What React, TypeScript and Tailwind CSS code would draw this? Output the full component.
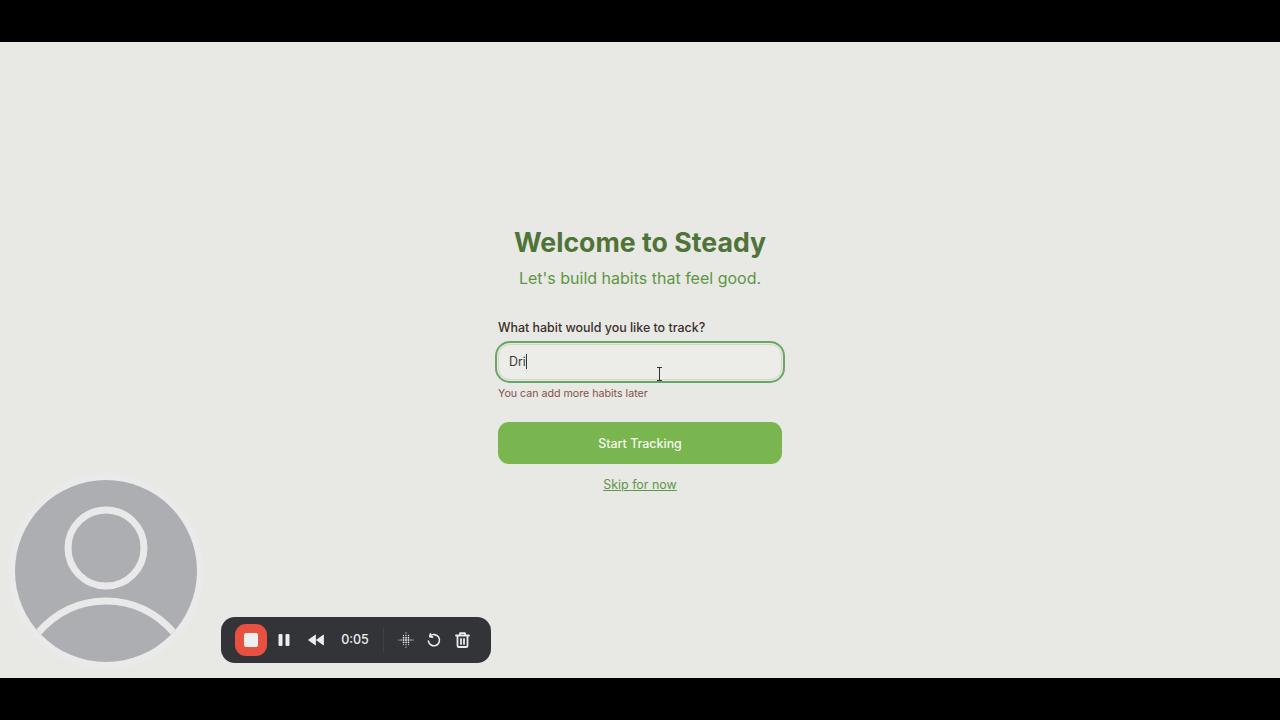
import React from "react";

function Dots() {
  const dots: [number, number, number][] = [
    [8, 0.9, 0.6], [8, 3.4, 0.7], [8, 5.7, 0.9], [8, 8, 1], [8, 10.3, 0.9], [8, 12.6, 0.7], [8, 15.1, 0.6],
    [5.5, 3.4, 0.55], [5.5, 5.7, 0.85], [5.5, 8, 0.9], [5.5, 10.3, 0.85], [5.5, 12.6, 0.55],
    [10.5, 3.4, 0.55], [10.5, 5.7, 0.85], [10.5, 8, 0.9], [10.5, 10.3, 0.85], [10.5, 12.6, 0.55],
    [3, 8, 0.7], [13, 8, 0.7],
    [0.9, 8, 0.6], [15.1, 8, 0.6],
  ];
  return (
    <svg width="16" height="16" viewBox="0 0 16 16" fill="#e8e8e8">
      {dots.map(([x, y, r], i) => (
        <circle key={i} cx={x} cy={y} r={r} />
      ))}
    </svg>
  );
}

export default function App() {
  return (
    <div className="relative flex h-[720px] w-[1280px] flex-col overflow-hidden bg-black font-['Inter',sans-serif]">
      <div className="mt-[42px] flex h-[636px] items-center justify-center bg-[#e8e9e4]">
        <div className="flex w-[284px] flex-col">
          <h1 className="whitespace-nowrap text-center text-[26.7px] leading-[34px] font-bold text-[#50733a]">
            Welcome to Steady
          </h1>
          <p className="mt-[7px] whitespace-nowrap text-center text-base leading-6 text-[#5e9645]">
            Let's build habits that feel good.
          </p>
          <label className="mt-[28px] text-[12.45px] leading-5 font-medium text-[#3a2f2c]">
            What habit would you like to track?
          </label>
          <div className="mt-[6px] flex h-[36px] items-center rounded-[12px] border border-[#dcd3c5] bg-[#ecece9] px-[10px] shadow-[0_0_0_1px_#e8e9e4,0_0_0_3px_#66a863]">
            <span className="text-[12.45px] leading-5 text-[#3f3a38]">Dri</span>
            <span className="h-[15px] w-px bg-[#333333]" />
          </div>
          <p className="mt-[6px] text-[10.65px] leading-4 text-[#85504a]">You can add more habits later</p>
          <button className="mt-[20px] h-[42px] rounded-[11px] bg-[#7ab650] pt-[3px] text-[12.45px] leading-5 font-medium text-[#f4f7ee]">
            Start Tracking
          </button>
          <a className="mt-[11px] mb-px text-center text-[12.45px] leading-5 text-[#5e9645] underline">Skip for now</a>
        </div>
      </div>

      {/* I-beam cursor */}
      <svg className="absolute top-[367px] left-[656px]" width="7" height="14" viewBox="0 0 7 14" fill="none" stroke="#333" strokeWidth="1">
        <path d="M1 .5h5M3.5.5v13M1 13.5h5" />
      </svg>

      {/* Webcam placeholder */}
      <div className="absolute top-[473px] left-[8px] flex h-[196px] w-[196px] items-center justify-center rounded-full bg-[#eaeaea]">
        <svg width="182" height="182" viewBox="0 0 182 182">
          <defs>
            <clipPath id="avatar">
              <circle cx="91" cy="91" r="91" />
            </clipPath>
          </defs>
          <circle cx="91" cy="91" r="91" fill="#adaeb1" />
          <circle cx="91" cy="68" r="38" fill="none" stroke="#e9e9ea" strokeWidth="7" />
          <g clipPath="url(#avatar)">
            <path d="M22 154C40 133 64 121 91 121s51 12 69 33" fill="none" stroke="#e9e9ea" strokeWidth="7" />
          </g>
        </svg>
      </div>

      {/* Recording toolbar */}
      <div className="absolute top-[617px] left-[221px] flex h-[46px] w-[270px] items-center rounded-[14px] bg-[#333438] pl-[14px] text-[#ececec]">
        <div className="flex h-[32px] w-[32px] items-center justify-center rounded-[11px] bg-[#e8513f]">
          <div className="h-[14px] w-[14px] rounded-[2px] bg-[#eeeeee]" />
        </div>
        <svg className="ml-[11px]" width="12" height="12" viewBox="0 0 12 12" fill="#ececec">
          <rect x="0.5" y="0" width="4" height="12" rx="1" />
          <rect x="7.5" y="0" width="4" height="12" rx="1" />
        </svg>
        <svg className="ml-[18px]" width="16" height="12" viewBox="0 0 16 12" fill="#ececec">
          <path d="M7.5 1v10L.5 6zM15.5 1v10L8.5 6z" strokeLinejoin="round" stroke="#ececec" strokeWidth="0.8" />
        </svg>
        <span className="ml-[17px] w-[28px] whitespace-nowrap text-center text-[12.5px] font-medium">0:05</span>
        <div className="ml-[14px] h-[26px] w-px bg-[#3f4044]" />
        <div className="ml-[14px]">
          <Dots />
        </div>
        <svg className="ml-[13px]" width="14" height="15" viewBox="0 0 14 15" fill="none" stroke="#ececec" strokeWidth="1.6" strokeLinecap="round" strokeLinejoin="round">
          <path d="M3 3.2A5.6 5.6 0 1 1 1.4 8" />
          <path d="M3.4 .8 2.8 3.6l2.8.5" />
        </svg>
        <svg className="ml-[14px]" width="15" height="16" viewBox="0 0 15 16" fill="none" stroke="#ececec" strokeWidth="1.8" strokeLinecap="round" strokeLinejoin="round">
          <path d="M1 3.5h13M5 3.5V1.2h5v2.3M2.5 3.5v10.2c0 .8.5 1.3 1.3 1.3h7.4c.8 0 1.3-.5 1.3-1.3V3.5M6 7v5M9 7v5" />
        </svg>
      </div>
    </div>
  );
}
